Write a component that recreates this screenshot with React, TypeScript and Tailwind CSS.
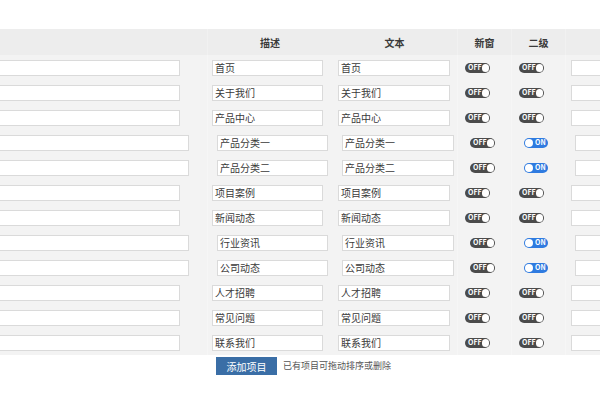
import React from 'react';

type Row = { label: string; sub?: boolean; second?: boolean };

const rows: Row[] = [
  { label: '首页' },
  { label: '关于我们' },
  { label: '产品中心' },
  { label: '产品分类一', sub: true, second: true },
  { label: '产品分类二', sub: true, second: true },
  { label: '项目案例' },
  { label: '新闻动态' },
  { label: '行业资讯', sub: true, second: true },
  { label: '公司动态', sub: true, second: true },
  { label: '人才招聘' },
  { label: '常见问题' },
  { label: '联系我们' },
];

const font = { fontFamily: '"Noto Sans CJK SC", "Liberation Sans", sans-serif' };

function Toggle({ on }: { on?: boolean }) {
  if (on) {
    return (
      <div className="flex h-[10px] w-[24px] items-center rounded-full bg-[#2f7be0] pl-[1px]">
        <span className="h-[8px] w-[8px] rounded-full bg-white" />
        <span className="ml-[2px] text-[7px] font-bold leading-none text-white">ON</span>
      </div>
    );
  }
  return (
    <div className="flex h-[10px] w-[25px] items-center justify-between rounded-full bg-[#4b4b4b] pl-[3px] pr-[1px]">
      <span className="text-[7px] font-bold leading-none text-white">OFF</span>
      <span className="h-[8px] w-[8px] rounded-full bg-white" />
    </div>
  );
}

function Field({ value, className }: { value?: string; className: string }) {
  return (
    <div
      className={`flex h-[16px] items-center border border-[#dadada] bg-white pl-[2px] text-[10px] leading-none text-[#3a3a3a] ${className}`}
    >
      {value}
    </div>
  );
}

export default function App() {
  return (
    <div className="h-[400px] w-[600px] overflow-hidden bg-white" style={font}>
      <div className="pt-[29px]">
        {/* header */}
        <div className="flex h-[26px] w-[640px] items-center bg-[#ededed] text-[10px] font-semibold text-[#3a3a3a]">
          <div className="h-full w-[208px] border-r border-[#f1f1f1]" />
          <div className="flex h-full w-[124px] items-center justify-center">描述</div>
          <div className="flex h-full w-[126px] items-center justify-center border-r border-[#f1f1f1]">文本</div>
          <div className="flex h-full w-[54px] items-center justify-center border-r border-[#f1f1f1]">新窗</div>
          <div className="flex h-full w-[54px] items-center justify-center border-r border-[#f1f1f1]">二级</div>
          <div className="h-full flex-1" />
        </div>

        {/* body */}
        <div className="w-[640px] bg-[#f3f3f3]">
          {rows.map((r) => (
            <div key={r.label} className="flex h-[25px] items-center">
              <div className="flex h-full w-[208px] items-center border-r border-[#f6f6f6]">
                <Field className={r.sub ? 'w-[189px] border-l-0' : 'w-[180px] border-l-0'} />
              </div>
              <div className={`flex h-full w-[124px] items-center ${r.sub ? 'pl-[9px]' : 'pl-[4px]'}`}>
                <Field value={r.label} className="w-[111px]" />
              </div>
              <div
                className={`flex h-full w-[126px] items-center border-r border-[#f6f6f6] ${r.sub ? 'pl-[10px]' : 'pl-[6px]'}`}
              >
                <Field value={r.label} className="w-[112px]" />
              </div>
              <div
                className={`flex h-full w-[54px] items-center border-r border-[#f6f6f6] ${r.sub ? 'pl-[12px]' : 'pl-[7px]'}`}
              >
                <Toggle />
              </div>
              <div
                className={`flex h-full w-[54px] items-center border-r border-[#f6f6f6] ${r.sub ? 'pl-[12px]' : 'pl-[7px]'}`}
              >
                <Toggle on={r.second} />
              </div>
              <div className={`flex h-full flex-1 items-center ${r.sub ? 'pl-[9px]' : 'pl-[5px]'}`}>
                <Field className="w-[60px]" />
              </div>
            </div>
          ))}
        </div>

        {/* footer */}
        <div className="mt-[2px] flex items-center pl-[216px]">
          <button className="flex h-[18px] w-[61px] items-center justify-center bg-[#3a6ea6] text-[10px] text-white">
            添加项目
          </button>
          <span className="ml-[6px] text-[9px] text-[#555]">已有项目可拖动排序或删除</span>
        </div>
      </div>
    </div>
  );
}
